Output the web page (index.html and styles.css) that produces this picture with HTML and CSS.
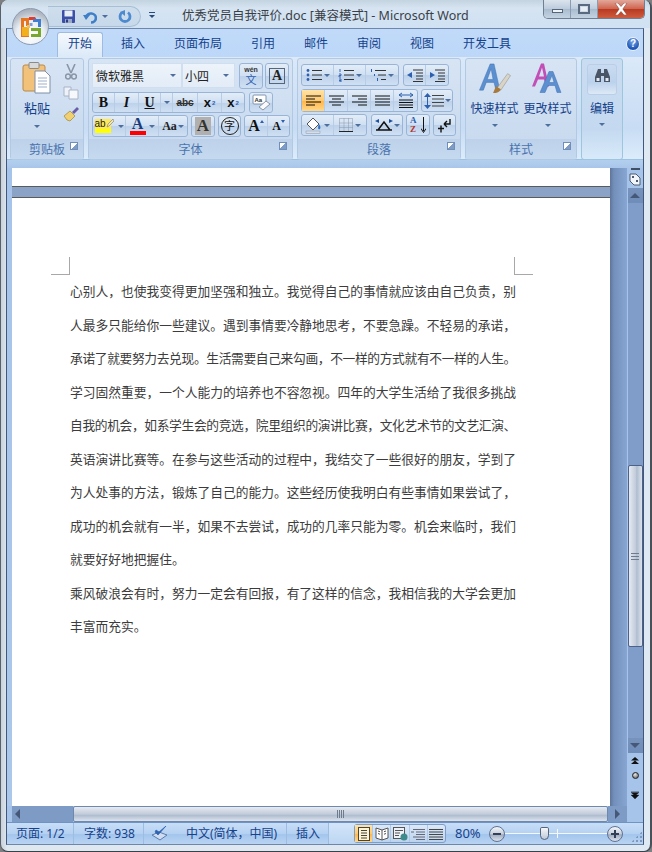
FILE: index.html
```html
<!DOCTYPE html>
<html lang="zh">
<head>
<meta charset="utf-8">
<title>优秀党员自我评价.doc - Microsoft Word</title>
<link rel="stylesheet" href="styles.css">
</head>
<body>
<div class="window">
  <header class="titlebar">
    <div class="office">
      <svg width="26" height="26" viewBox="0 0 26 26"><path d="M3 4h8v8H8V7H6v12h5v4H3z" fill="#e8741c"/><path d="M11 3h6l2 3h-8z" fill="#e33b2e"/><path d="M15 5h8v8h-3V8h-5z" fill="#3f7fd0"/><path d="M13 14h10v9H13v-3h7v-3h-7z" fill="#79a92c"/><path d="M4 13h7v9H4z" fill="#f2b01e"/><rect x="11.500" y="9" width="3" height="3" fill="#79a0d8"/><rect x="9" y="11" width="3" height="3" fill="#f0c060"/></svg>
    </div>
    <div class="qat">
      <svg width="15" height="15" viewBox="0 0 15 15"><rect x="1" y="1" width="13" height="13" rx="1" fill="#3c4fa8"/><rect x="3.500" y="1.500" width="8" height="6" fill="#e8eef8"/><rect x="4" y="10" width="7" height="4" fill="#9aa9c8"/><rect x="5" y="10.500" width="2" height="3" fill="#2c3a80"/></svg>
      <svg class="qi-undo" width="14" height="14" viewBox="0 0 14 14"><path d="M3 7a5 4.500 0 1 1 5 5.500" fill="none" stroke="#3f7fc8" stroke-width="2.600"/><path d="M0 5h7L3 10z" fill="#3f7fc8"/></svg>
      <i class="arrow qi-drop"></i>
      <svg class="qi-redo" width="14" height="14" viewBox="0 0 14 14"><path d="M4 2.500a5 5 0 1 0 6 0" fill="none" stroke="#4d8ad0" stroke-width="2.800"/><path d="M7 0v6L2 2z" fill="#4d8ad0"/></svg>
    </div>
    <div class="customize"><b></b><i class="arrow dark"></i></div>
    <h1 class="doc-title">优秀党员自我评价.doc [兼容模式] - Microsoft Word</h1>
    <div class="winbtns">
      <div class="wb wb-min"><b></b></div>
      <div class="wb wb-max"><b></b></div>
      <div class="wb wb-close">
        <svg width="16" height="12" viewBox="0 0 16 12"><path d="M2 0h3l3 3.500L11 0h3L9.800 6 14 12h-3L8 8.500 5 12H2l4.200-6z" fill="#fff" stroke="#7a3a30" stroke-width=".5"/></svg>
      </div>
    </div>
  </header>

  <div class="client">
    <nav class="tabs">
      <span class="tab active">开始</span>
      <span class="tab t-ins">插入</span>
      <span class="tab t-layout">页面布局</span>
      <span class="tab t-ref">引用</span>
      <span class="tab t-mail">邮件</span>
      <span class="tab t-rev">审阅</span>
      <span class="tab t-view">视图</span>
      <span class="tab t-dev">开发工具</span>
      <span class="help">?</span>
    </nav>

    <section class="ribbon">
      <div class="group g-clip">
        <div class="gbody clip-body">
          <div class="big paste">
            <svg width="30" height="33" viewBox="0 0 30 33"><rect x="1" y="3" width="22" height="26" rx="2" fill="#f2c27a" stroke="#b98a48"/><rect x="7" y="0.500" width="10" height="6" rx="1" fill="#d9d9d9" stroke="#8a8a8a"/><path d="M13 9h10l5 5v17H13z" fill="#fff" stroke="#7f8fa8"/><path d="M16 16h9M16 19h9M16 22h9M16 25h9" stroke="#9db0c8"/></svg>
            <span class="biglabel">粘贴</span>
            <i class="arrow"></i>
          </div>
          <div class="clip-tools">
            <svg width="12" height="16" viewBox="0 0 12 16"><path d="M2 0l4 9M10 0L6 9" stroke="#8a96a8" stroke-width="1.600"/><circle cx="3" cy="12.500" r="2.400" fill="none" stroke="#8a96a8" stroke-width="1.500"/><circle cx="9" cy="12.500" r="2.400" fill="none" stroke="#8a96a8" stroke-width="1.500"/></svg>
            <svg width="16" height="14" viewBox="0 0 16 14"><path d="M1 1h7v9H1z" fill="#eef2f8" stroke="#a8b4c8"/><path d="M6 4h9v9H6z" fill="#f6f8fb" stroke="#a8b4c8"/></svg>
            <svg width="18" height="16" viewBox="0 0 18 16"><path d="M10 6l5-5 2 2-5 5z" fill="#6b5ca8"/><path d="M2 10l6-5 5 5-5 5-3-1z" fill="#f0d070" stroke="#a08430" stroke-width=".7"/></svg>
          </div>
        </div>
        <div class="glabel">剪贴板<u class="launch"></u></div>
      </div>

      <div class="group g-font">
        <div class="gbody font-body">
          <div class="row r1">
            <div class="combo c-name"><span>微软雅黑</span><i class="arrow"></i></div>
            <div class="combo c-size"><span>小四</span><i class="arrow"></i></div>
            <div class="btn w24 wen"><small>wén</small><em>文</em></div>
            <div class="btn w24"><span class="boxa">A</span></div>
          </div>
          <div class="row r2">
            <div class="bgroup">
              <span class="cell w22 serif bold">B</span>
              <span class="cell w24 serif ital">I</span>
              <span class="cell w22 serif under">U</span>
              <span class="cell w12"><i class="arrow"></i></span>
              <span class="cell w25 abc">abc</span>
              <span class="cell w24 sub">x<sub>2</sub></span>
              <span class="cell w22 sub">x<sup>2</sup></span>
            </div>
            <div class="btn w24 mt-eraser">
              <svg width="19" height="18" viewBox="0 0 19 18"><rect x="1" y="1" width="13" height="9" rx="1" fill="#fff" stroke="#7f93b0"/><text x="2.500" y="8" class="mini">Aa</text><path d="M7 13l7-6 4 3-7 6z" fill="#fafafa" stroke="#8a96a8"/></svg>
            </div>
          </div>
          <div class="row r3">
            <div class="bgroup">
              <span class="cell w33 hl"><span class="hl-a"><b>ab</b><svg width="8" height="9" viewBox="0 0 8 9"><path d="M1 8l1-3 5-5 1 2-5 5z" fill="#f4e6a8" stroke="#777" stroke-width=".6"/></svg></span><i class="arrow"></i></span>
              <span class="cell w33 fcolor"><b>A</b><i class="arrow"></i></span>
              <span class="cell aa"><b>Aa</b><i class="arrow"></i></span>
            </div>
            <div class="btn w24 shade"><b>A</b></div>
            <div class="btn w23 circ"><span>字</span></div>
            <div class="bgroup">
              <span class="cell w23 grow"><b>A</b><i class="up"></i></span>
              <span class="cell w21 shrink"><b>A</b><i class="down"></i></span>
            </div>
          </div>
        </div>
        <div class="glabel">字体<u class="launch"></u></div>
      </div>

      <div class="group g-para">
        <div class="gbody para-body">
          <div class="row pr1">
            <div class="bgroup">
              <span class="cell pc32"><svg width="16" height="14" viewBox="0 0 16 14"><path d="M6 2.500h10M6 7h10M6 11.500h10" stroke="#333"/><circle cx="2" cy="2.500" r="1.400" fill="#2d5fb0"/><circle cx="2" cy="7" r="1.400" fill="#2d5fb0"/><circle cx="2" cy="11.500" r="1.400" fill="#2d5fb0"/></svg><i class="arrow"></i></span>
              <span class="cell pc32"><svg width="16" height="14" viewBox="0 0 16 14"><path d="M6 2.500h10M6 7h10M6 11.500h10" stroke="#333"/><path d="M2 1v3M1 6h2v1.500H1V9h2M1 11h2v3H1M1 12.500h2" stroke="#2d5fb0" stroke-width=".9" fill="none"/></svg><i class="arrow"></i></span>
              <span class="cell pc32"><svg width="16" height="14" viewBox="0 0 16 14"><path d="M5 2.500h11M8 7h8M11 11.500h5" stroke="#333"/><path d="M1.500 1v3M4.500 6v2M7.500 10v3" stroke="#2d5fb0"/></svg><i class="arrow"></i></span>
            </div>
            <div class="bgroup">
              <span class="cell pc22"><svg width="16" height="13" viewBox="0 0 16 13"><path d="M6 1h10M9 4h7M9 7h7M9 10h7M6 12.500h10" stroke="#333"/><path d="M0 6l5-3v6z" fill="#2d5fb0"/></svg></span>
              <span class="cell pc22"><svg width="16" height="13" viewBox="0 0 16 13"><path d="M6 1h10M9 4h7M9 7h7M9 10h7M6 12.500h10" stroke="#333"/><path d="M6 6L1 3v6z" fill="#2d5fb0"/></svg></span>
            </div>
          </div>
          <div class="row pr2">
            <div class="bgroup">
              <span class="cell al on"><svg width="15" height="12" viewBox="0 0 15 12"><path d="M0 1h15M0 4h9M0 7h15M0 10h9" stroke="#111"/></svg></span>
              <span class="cell al"><svg width="15" height="12" viewBox="0 0 15 12"><path d="M0 1h15M3 4h9M0 7h15M3 10h9" stroke="#111"/></svg></span>
              <span class="cell al"><svg width="15" height="12" viewBox="0 0 15 12"><path d="M0 1h15M6 4h9M0 7h15M6 10h9" stroke="#111"/></svg></span>
              <span class="cell al"><svg width="15" height="12" viewBox="0 0 15 12"><path d="M0 1h15M0 4h15M0 7h15M0 10h15" stroke="#111"/></svg></span>
              <span class="cell al"><svg width="16" height="17" viewBox="0 0 16 17"><path d="M1 8h14M1 10.500h14M1 13h14M1 15.500h14" stroke="#111"/><path d="M1 3h14M1 3l3-2M1 3l3 2M15 3l-3-2M15 3l-3 2" stroke="#2d5fb0" fill="none"/></svg></span>
            </div>
            <div class="btn lsp"><svg width="20" height="16" viewBox="0 0 20 16"><path d="M8 2.500h12M8 6h12M8 9.500h12M8 13h12" stroke="#444"/><path d="M3.500 0L7 4H0zM3.500 16L7 12H0z" fill="#2d5fb0"/><path d="M3.500 4v8" stroke="#2d5fb0"/></svg><i class="arrow"></i></div>
          </div>
          <div class="row pr3">
            <div class="bgroup borders">
              <span class="cell pc32"><svg width="17" height="17" viewBox="0 0 17 17"><path d="M2 7l6-6 6 6-6 6z" fill="#fff" stroke="#555"/><path d="M14 7c1 2 2 3 1 5-1 1-3 0-1-5z" fill="#2d6fc0"/><rect x="1" y="14" width="14" height="2.500" fill="#d6dde8" stroke="#8a96a8" stroke-width=".5"/></svg><i class="arrow"></i></span>
              <span class="cell pc32"><svg width="14" height="14" viewBox="0 0 14 14"><path d="M.5.500h13v13H.5zM.5 5h13M.5 9.500h13M5 .5v13M9.500.5v13" fill="none" stroke="#8a96a8" stroke-dasharray="1 1"/><path d="M0 13.500h14" stroke="#222"/></svg><i class="arrow"></i></span>
            </div>
            <div class="btn w32"><svg width="18" height="12" viewBox="0 0 18 12"><path d="M3 11L9 3l6 8M1 11h16" fill="none" stroke="#111" stroke-width="1.500"/><path d="M0 2l4-2v4zM18 2l-4-2v4zM6 2h6" fill="#1d4fa0"/></svg><i class="arrow"></i></div>
            <div class="btn w24 sort"><span class="a">A</span><span class="z">Z</span><svg width="5" height="17" viewBox="0 0 5 17"><path d="M2.500 0v14M0 11.500l2.500 4 2.500-4" fill="none" stroke="#111"/></svg></div>
            <div class="btn w23"><svg width="14" height="15" viewBox="0 0 14 15"><path d="M12 1v5H6M6 6l3-3M6 6l3 3" fill="none" stroke="#111" stroke-width="1.400"/><path d="M0 10.500h6M3 7.500v7" stroke="#111" stroke-width="1.400"/></svg></div>
          </div>
        </div>
        <div class="glabel">段落<u class="launch"></u></div>
      </div>

      <div class="group g-style">
        <div class="gbody style-body">
          <div class="big st">
            <svg width="34" height="34" viewBox="0 0 34 34"><path d="M1 29L12 2h4l6 27h-4l-2-8H8l-3 8zM9 18h6l-2-11z" fill="#5b8fd0" stroke="#3e6fb0" stroke-width=".5"/><path d="M19 27l11-15 3 2-10 15z" fill="#d9d4c8" stroke="#8a8678" stroke-width=".5"/><path d="M15 32l3-7 5 3c-1 3-4 4-8 4z" fill="#a87a3c"/></svg>
            <span class="biglabel">快速样式</span>
            <i class="arrow"></i>
          </div>
          <div class="big st">
            <svg width="32" height="30" viewBox="0 0 32 30"><path d="M0 23L9 0h3l5 23h-3l-2-7H6l-3 7zM7 13h5L10 4z" fill="#c24fb6"/><path d="M8 29L17 8h4l8 21h-4l-2-7h-7l-3 7zM17 19h5l-2-7z" fill="#5b8fd0" stroke="#3e6fb0" stroke-width=".5"/></svg>
            <span class="biglabel">更改样式</span>
            <i class="arrow"></i>
          </div>
        </div>
        <div class="glabel">样式<u class="launch"></u></div>
      </div>

      <div class="group g-edit">
        <div class="edit-top">
          <svg width="15" height="14" viewBox="0 0 15 14"><path d="M3 0h3v4h3V0h3l3 8v5H9V7H6v6H0V8z" fill="#4a5566"/><path d="M1.500 9h3v3h-3zM10.500 9h3v3h-3z" fill="#dfe8f3"/></svg>
        </div>
        <span class="biglabel">编辑</span>
        <i class="arrow"></i>
      </div>
    </section>

    <div class="ribbon-gap"></div>

    <div class="workspace">
      <div class="sidebar"></div>
      <div class="doc">
        <div class="pages">
          <div class="page-end"></div>
          <div class="page">
            <div class="crop">
              <span class="mark m-left"></span>
              <span class="mark m-right"></span>
            </div>
            <div class="text">
              <p class="line">心别人，也使我变得更加坚强和独立。我觉得自己的事情就应该由自己负责，别</p>
              <p class="line">人最多只能给你一些建议。遇到事情要冷静地思考，不要急躁。不轻易的承诺，</p>
              <p class="line tight">承诺了就要努力去兑现。生活需要自己来勾画，不一样的方式就有不一样的人生。</p>
              <p class="line">学习固然重要，一个人能力的培养也不容忽视。四年的大学生活给了我很多挑战</p>
              <p class="line tight">自我的机会，如系学生会的竞选，院里组织的演讲比赛，文化艺术节的文艺汇演、</p>
              <p class="line">英语演讲比赛等。在参与这些活动的过程中，我结交了一些很好的朋友，学到了</p>
              <p class="line">为人处事的方法，锻炼了自己的能力。这些经历使我明白有些事情如果尝试了，</p>
              <p class="line">成功的机会就有一半，如果不去尝试，成功的几率只能为零。机会来临时，我们</p>
              <p class="last">就要好好地把握住。</p>
              <p class="line">乘风破浪会有时，努力一定会有回报，有了这样的信念，我相信我的大学会更加</p>
              <p class="last">丰富而充实。</p>
            </div>
          </div>
        </div>
        <div class="doc-shade"></div>
      </div>
      <aside class="vscroll">
        <div class="split"></div>
        <div class="ruler-btn"><svg width="12" height="13" viewBox="0 0 12 13"><path d="M1 1h6l4 4v7H5L1 8z" fill="#f2f5fa" stroke="#4d5a70"/><path d="M3 3h2v2H3zM7 7h2v2H7z" fill="#4d5a70"/></svg></div>
        <div class="track">
          <div class="sb-up"><i></i></div>
          <div class="track-a"></div>
          <div class="thumb"><span></span></div>
          <div class="track-b"></div>
          <div class="sb-down"><i></i></div>
        </div>
        <div class="browse">
          <svg width="8" height="8" viewBox="0 0 8 8"><path d="M4 0L8 3.500H0zM4 3.500L8 7H0z" fill="#111"/></svg>
          <span class="ball"></span>
          <svg width="8" height="8" viewBox="0 0 8 8"><path d="M0 .5h8M0 1.500h8L4 5zM0 4h8L4 8z" fill="#111" stroke="#111" stroke-width=".3"/></svg>
        </div>
      </aside>
    </div>

    <div class="hscroll">
      <div class="hbtn-left"><i></i></div>
      <div class="hthumb"><span></span></div>
      <div class="hbtn-right"><i></i></div>
      <div class="hcorner"></div>
    </div>

    <footer class="status">
      <span class="st-item s-page">页面: 1/2</span>
      <span class="st-item s-count">字数: 938</span>
      <span class="st-item s-proof"><svg width="18" height="15" viewBox="0 0 18 15"><path d="M1 9l7-3 8 3-7 5z" fill="#cfdcf0" stroke="#5d7cab"/><path d="M4 6l3 3 8-9-7 6-3-2z" fill="#2f62b0" stroke="#2f62b0" stroke-width=".7"/></svg></span>
      <span class="st-item s-lang">中文(简体，中国)</span>
      <span class="st-item s-ins">插入</span>
      <span class="st-fill"></span>
      <div class="views">
        <span class="v on"><svg width="12" height="14" viewBox="0 0 12 14"><rect x=".5" y=".5" width="11" height="13" fill="#fff4d0" stroke="#444"/><path d="M3 3.500h6M3 6h6M3 8.500h6M3 11h6" stroke="#444"/></svg></span>
        <span class="v"><svg width="14" height="14" viewBox="0 0 14 14"><path d="M7 3L1 1v10l6 2 6-2V1z" fill="#fff" stroke="#555"/><path d="M7 3v10M3 4l2 .7M3 6.500l2 .7M9 4.700l2-.7M9 7.200l2-.7" stroke="#555"/></svg></span>
        <span class="v"><svg width="15" height="14" viewBox="0 0 15 14"><rect x=".5" y=".5" width="11" height="11" fill="#eef2f8" stroke="#555"/><path d="M2 3.500h8M2 6h5M2 8.500h4" stroke="#555"/><circle cx="11" cy="10" r="3.500" fill="#3f8a8a"/></svg></span>
        <span class="v"><svg width="14" height="12" viewBox="0 0 14 12"><path d="M2 1.500h12M5 4h9M5 6.500h9M2 9h12M5 11.500h9" stroke="#667"/><path d="M0 4h3" stroke="#667"/></svg></span>
        <span class="v"><svg width="14" height="12" viewBox="0 0 14 12"><path d="M0 1.500h14M0 4h14M0 6.500h14M0 9h14M0 11.500h14" stroke="#444"/></svg></span>
      </div>
      <span class="zoom-val">80%</span>
      <span class="zbtn"><b></b></span>
      <div class="slider"><i class="tick"></i><i class="knob"></i></div>
      <span class="zbtn plus"><b></b></span>
      <span class="grip"></span>
    </footer>
  </div>
</div>
</body>
</html>
```
FILE: styles.css
```css
* { box-sizing: border-box; }
html, body { margin: 0; padding: 0; background: #7d7f80; }
body { font-family: "Noto Sans", "Noto Sans CJK SC", sans-serif; }
p, h1 { margin: 0; }
.window {
  width: 652px; height: 852px; overflow: hidden;
  background: linear-gradient(90deg, #c8d2dc 0, #dfe7ef 6px, #dfe9f4 100%);
  border-radius: 8px;
  border-right: 2px solid #4a5058;
  border-bottom: 1px solid #3a4048;
  border-left: 1px solid #5a6068;
  display: flex; flex-direction: column;
}

/* title bar */
.titlebar {
  height: 28px; flex: none; display: flex; position: relative;
  background: linear-gradient(180deg, #c4d3e0 0, #d6e4f2 8px, #cfe1f3 100%);
}
.office {
  position: absolute; left: 11px; top: 8px; width: 37px; height: 37px; border-radius: 50%; z-index: 3;
  background: radial-gradient(circle at 50% 75%, #fff 0, #e8eef4 45%, #b6bdc6 72%, #8e96a2 100%);
  border: 1px solid #8a9ab0; display: flex; align-items: center; justify-content: center;
}
.qat {
  margin: 6px 0 0 47px; width: 93px; height: 21px;
  border: 1px solid #a6bed6; border-left: 0; border-radius: 0 11px 11px 0;
  background: linear-gradient(180deg, #cfdeec, #c6d8ea);
  display: flex; align-items: center; padding-left: 13px;
}
.qi-undo { margin-left: 7px; }
.qi-drop { margin-left: 5px; }
.qi-redo { margin-left: 10px; }
.customize { margin: 12px 0 0 7px; width: 7px; display: flex; flex-direction: column; align-items: center; gap: 2px; }
.customize b { width: 6px; height: 1px; background: #2a4a78; }
.doc-title {
  margin: 7px 0 0 27px; font-size: 12.500px; line-height: 18px; font-weight: 400; color: #3a3f47; white-space: nowrap;
  width: 292px;
}
.winbtns {
  margin-left: auto; margin-right: 5px; height: 19px; width: 102px; display: flex; flex: none;
  border: 1px solid #6e7f92; border-top: 0; border-radius: 0 0 5px 5px; overflow: hidden;
}
.wb { height: 100%; display: flex; align-items: center; justify-content: center; background: linear-gradient(180deg, #dbe4ee, #bccbdb 50%, #a9bccf 52%, #c4d3e3); border-right: 1px solid #8c9cb0; }
.wb-min { width: 28px; }
.wb-min b { width: 11px; height: 4px; margin-top: 4px; background: #eef3f8; border: 1px solid #56657a; }
.wb-max { width: 27px; }
.wb-max b { width: 12px; height: 10px; background: #e8eef5; border: 2px solid #5a6a80; box-shadow: inset 0 0 0 1px #cfd9e5; }
.wb-close { width: 47px; border: 0; background: linear-gradient(180deg, #e2a79a, #cf6650 48%, #b83a22 52%, #cf5c3e); }

/* client */
.client {
  margin-left: 5px; width: 638px; height: 817px; flex: none;
  border-top: 1px solid #6c87a8; border-left: 1px solid #41587a; border-right: 1px solid #41587a;
  border-bottom: 1px solid #6c87a8;
  display: flex; flex-direction: column;
  background: #a9c6ea;
}
.tabs {
  height: 28px; flex: none; position: relative; display: flex;
  background: linear-gradient(180deg, #c1dafa, #bcd7f8);
  color: #15428b; font-size: 12px;
}
.tab { line-height: 17px; margin-top: 2px; padding-top: 4px; white-space: nowrap; }
.tab.active {
  margin: 3px 0 0 50px; width: 46px; height: 25px; text-align: center; padding-top: 2px;
  border: 1px solid #9dbcdf; border-bottom: 0; border-radius: 3px 3px 0 0;
  background: linear-gradient(180deg, #f5f9fd, #dbe9f8);
  position: relative; z-index: 1;
}
.t-ins { margin-left: 18px; }
.t-layout, .t-ref, .t-mail, .t-rev, .t-view, .t-dev { margin-left: 29px; }
.help {
  margin: 8px 3px 0 auto; padding: 0; width: 14px; height: 14px; border-radius: 50%;
  background: radial-gradient(circle at 50% 30%, #7aa8e8, #1d55b5 70%);
  border: 1px solid #e8f0fa; color: #fff; font: 700 10px/12px "Liberation Sans", sans-serif; text-align: center;
}

.ribbon {
  height: 103px; flex: none; padding: 1px 7px 0 3px; display: flex; gap: 4px;
  background: linear-gradient(180deg, #dbe9f8 0, #c8dcf4 70%, #dcecfb 100%);
  border-bottom: 1px solid #9cc2e2;
  color: #15428b;
}
.group {
  height: 102px; flex: none; display: flex; flex-direction: column;
  border: 1px solid #b2c9e3; border-radius: 3px;
  background: linear-gradient(180deg, #d7e4f4, #c6d8ee);
}
.g-clip { width: 74px; }
.g-font { width: 205px; }
.g-para { width: 164px; }
.g-style { width: 112px; }
.g-edit { width: 42px; align-items: center; background: linear-gradient(180deg, #cadcf1, #c4d9f0 70%, #d8eafa); border-color: #9cc6dc; }
.gbody { flex: 1; min-height: 0; }
.glabel {
  height: 20px; flex: none; position: relative; text-align: center;
  font-size: 12px; line-height: 20px; padding-top: 1px; color: #4a73ad;
  background: linear-gradient(180deg, #bdd2ea, #c5d9ef);
}
.launch { position: absolute; right: 5px; top: 3px; width: 8px; height: 8px; border: 1px solid #6f8fb8; background: linear-gradient(135deg, #fff 50%, #7f9cc4 50%); }

.arrow { display: inline-block; width: 0; height: 0; border: 3px solid transparent; border-top: 3px solid #4d6f9e; border-bottom: 0; flex: none; }
.arrow.dark { border-top-color: #2a4a78; }

.big { display: flex; flex-direction: column; align-items: center; }
.biglabel { font-size: 12px; line-height: 16px; color: #15428b; white-space: nowrap; }

.clip-body { display: flex; padding: 3px 0 0 7px; }
.paste { width: 38px; }
.paste .biglabel { margin-top: 5px; font-size: 13px; }
.paste .arrow { margin-top: 9px; }
.clip-tools { margin-left: 5px; width: 20px; padding-top: 2px; display: flex; flex-direction: column; align-items: center; gap: 6px; }

.font-body { padding: 4px 0 0 3px; display: flex; flex-direction: column; gap: 2px; }
.row { display: flex; }
.r1 { gap: 2px; height: 26px; }
.r2 { gap: 4px; height: 21px; margin-top: 1px; }
.r3 { gap: 3px; height: 22px; }
.combo {
  height: 25px; background: linear-gradient(180deg, #edf3fa, #e2ecf7); display: flex; align-items: center; justify-content: space-between;
  padding: 0 5px 0 3px; font-size: 12px; color: #222; border: 1px solid #d0dff0;
}
.c-name { width: 90px; margin-right: -2px; }
.c-size { width: 53px; margin-right: 2px; padding-left: 2px; }
.btn {
  display: flex; align-items: center; justify-content: center; flex: none;
  border: 1px solid #98b5d8; border-radius: 3px;
  background: linear-gradient(180deg, #e3edf8, #cfdff2 50%, #bcd1ea 52%, #d0e0f3);
  color: #222;
}
.bgroup {
  display: flex; flex: none;
  border: 1px solid #98b5d8; border-radius: 3px;
  background: linear-gradient(180deg, #e3edf8, #cfdff2 50%, #bcd1ea 52%, #d0e0f3);
}
.cell {
  display: flex; align-items: center; justify-content: center; gap: 2px; color: #111;
  border-right: 1px solid #b7cde6; height: 100%; flex: none;
}
.cell:last-child { border-right: 0; }
.w12 { width: 12px; }
.w21 { width: 21px; }
.w22 { width: 22px; }
.w23 { width: 23px; }
.w24 { width: 24px; }
.w25 { width: 25px; }
.w32 { width: 32px; }
.w33 { width: 33px; }
.wen { flex-direction: column; }
.wen small { font: 700 7px/7px "Liberation Sans", sans-serif; color: #333; }
.wen em { font-style: normal; font-size: 11px; line-height: 13px; color: #2d5fb0; }
.boxa { font: 700 14px/14px "Liberation Serif", serif; width: 16px; height: 16px; text-align: center; border: 1px solid #56657a; color: #222; }
.serif { font-family: "Liberation Serif", serif; font-size: 14px; }
.bold { font-weight: 700; }
.ital { font-style: italic; font-weight: 700; }
.under { text-decoration: underline; font-weight: 700; }
.abc { font: 700 10px "Liberation Sans", sans-serif; text-decoration: line-through; color: #333; }
.sub { font: 700 13px "Liberation Sans", sans-serif; }
.sub sub, .sub sup { font-size: 6px; color: #2d5fb0; margin-left: -1px; line-height: 0; }
.mini { font: 700 6px "Liberation Sans", sans-serif; fill: #333; }

.hl { gap: 4px; }
.hl-a { display: flex; align-items: flex-start; }
.hl b { font: 400 10px/9px "Liberation Sans", sans-serif; background: linear-gradient(#ffe95a 10px, #ff0 10px); color: #222; height: 14px; width: 16px; display: block; }
.hl svg { margin-left: -5px; }
.fcolor { gap: 3px; }
.fcolor b { font: 700 16px/14px "Liberation Serif", serif; color: #1d3a78; border-bottom: 4px solid #f00; width: 16px; height: 18px; text-align: center; }
.aa { width: 28px; gap: 1px; }
.aa b { font: 700 12px "Liberation Serif", serif; color: #222; }
.shade b { font: 700 17px/18px "Liberation Serif", serif; background: #b0b0b0; color: #333; width: 16px; text-align: center; }
.circ span { width: 18px; height: 18px; border: 1px solid #222; border-radius: 50%; font-size: 11px; line-height: 15px; text-align: center; color: #111; }
.grow { gap: 0; }
.shrink { gap: 0; }
.grow b { font: 700 16px "Liberation Serif", serif; }
.shrink b { font: 700 12px "Liberation Serif", serif; }
.up, .down { width: 0; height: 0; border: 2.500px solid transparent; margin: -9px 0 0 0; }
.up { border-bottom: 3px solid #2d5fb0; border-top: 0; }
.down { border-top: 3px solid #2d5fb0; border-bottom: 0; }

.para-body { padding: 5px 0 0 3px; display: flex; flex-direction: column; }
.pr1 { height: 22px; gap: 4px; }
.pr2 { height: 23px; gap: 3px; margin-top: 3px; }
.pr3 { height: 22px; gap: 3px; margin-top: 2px; }
.borders { margin-right: 1px; }
.pc32 { width: 32px; }
.pc22 { width: 22px; }
.al { width: 23px; }
.al.on { background: linear-gradient(180deg, #ffe3a6, #ffc96e 50%, #ffb54a 52%, #ffd88a); }
.lsp { width: 32px; gap: 1px; }
.btn.w32 { gap: 1px; }
.sort { gap: 1px; position: relative; padding-left: 10px; }
.sort span { position: absolute; left: 3px; font: 700 9px/9px "Liberation Serif", serif; }
.sort .a { top: 1px; color: #2d5fb0; }
.sort .z { top: 10px; color: #b3342c; }

.style-body { display: flex; padding: 3px 0 0 3px; gap: 2px; }
.st { width: 51px; }
.st svg { height: 33px; }
.st .biglabel { margin-top: 6px; }
.st .arrow { margin-top: 7px; }
.edit-top { margin-top: 5px; width: 30px; height: 31px; border-radius: 3px; background: linear-gradient(180deg, #c9dbf0, #bcd2ec 60%, #dde9f6); border: 1px solid #b9cfe8; display: flex; justify-content: center; padding-top: 4px; }
.g-edit .biglabel { margin-top: 6px; }
.g-edit .arrow { margin-top: 6px; }

.ribbon-gap { height: 8px; flex: none; background: linear-gradient(180deg, #b3cfef, #a9c6ea); }

/* workspace */
.workspace { height: 638px; flex: none; display: flex; }
.sidebar { width: 5px; flex: none; background: linear-gradient(180deg, #a6c4e9, #abc7ea); }
.doc { width: 615px; flex: none; display: flex; background: linear-gradient(180deg, #8aa3c6 0, #7f9ac4 100%); overflow: hidden; }
.pages { width: 598px; flex: none; display: flex; flex-direction: column; gap: 10px; }
.page-end { height: 19px; flex: none; background: #fff; border-bottom: 1px solid #5a5a5a; }
.page {
  flex: 1; background: #fff; border-top: 1px solid #5a5a5a;
  padding: 59px 94px 0 58px; color: #3c3c3c;
}
.doc-shade { flex: 1; background: linear-gradient(90deg, #5f7598 0, #7390bc 4px, #88a6d2 100%); }
.crop { display: flex; justify-content: space-between; margin: 0 -17px 0 -19px; height: 18px; }
.mark { width: 19px; height: 18px; border-bottom: 1px solid #a8a8a8; }
.m-left { border-right: 1px solid #a8a8a8; }
.m-right { border-left: 1px solid #a8a8a8; }
.text { margin-top: -1px; font-size: 12.740px; font-family: "Noto Sans CJK SC", sans-serif; }
.line, .last { height: 33.500px; line-height: 33.500px; white-space: nowrap; }
.line { white-space: normal; text-align: justify; text-align-last: justify; overflow: hidden; }
.tight { letter-spacing: -.36px; }

/* vertical scrollbar */
.vscroll { width: 16px; flex: none; display: flex; flex-direction: column; align-items: center; background: #a6c4ea; }
.split { width: 9px; height: 2px; margin-top: 0; background: #3f4f66; flex: none; }
.ruler-btn { margin-top: 1px; height: 17px; display: flex; align-items: center; flex: none; }
.track { width: 15px; flex: 1; display: flex; flex-direction: column; background: #7f9dc8; }
.sb-up, .sb-down { height: 15px; flex: none; display: flex; align-items: center; justify-content: center; background: linear-gradient(180deg, #7793bd, #6f8db9); }
.sb-up i { border: 5px solid transparent; border-bottom: 5px solid #465878; border-top: 0; }
.sb-down i { border: 5px solid transparent; border-top: 5px solid #465878; border-bottom: 0; }
.track-a { height: 262px; flex: none; }
.thumb { height: 182px; flex: none; border: 1px solid #4d6189; border-radius: 2px; background: linear-gradient(90deg, #e6ebf2, #c3ccda 50%, #aebdd0 60%, #dde3ec); display: flex; align-items: center; justify-content: center; }
.thumb span { width: 8px; height: 7px; border-top: 1px solid #6e7b8c; border-bottom: 1px solid #6e7b8c; position: relative; background: linear-gradient(#0000 2px, #6e7b8c 2px, #6e7b8c 3px, #0000 3px); }
.track-b { flex: 1; }
.browse { height: 53px; flex: none; display: flex; flex-direction: column; align-items: center; padding-top: 4px; }
.ball { width: 7px; height: 7px; flex: none; border-radius: 50%; background: radial-gradient(circle at 40% 30%, #e8e8e8, #555); border: 1px solid #222; margin: 7px 0 12px; }

/* horizontal scrollbar */
.hscroll { height: 16px; flex: none; display: flex; background: #a6c4ea; }
.hbtn-left { margin-left: 5px; width: 61px; flex: none; background: #7e9bc6; display: flex; align-items: center; padding-left: 3px; }
.hbtn-left i { border: 5px solid transparent; border-right: 5px solid #465878; border-left: 0; }
.hthumb { width: 535px; flex: none; border: 1px solid #6e88ae; border-radius: 2px; background: linear-gradient(180deg, #e6ebf2, #c3ccda 50%, #aebdd0 60%, #dde3ec); display: flex; justify-content: center; align-items: center; }
.hthumb span { width: 7px; height: 8px; background: repeating-linear-gradient(90deg, #6e7b8c 0 1px, #0000 1px 2px); }
.hbtn-right { width: 19px; flex: none; background: #7e9bc6; display: flex; align-items: center; justify-content: center; }
.hbtn-right i { border: 5px solid transparent; border-left: 5px solid #465878; border-right: 0; }
.hcorner { flex: 1; }

/* status bar */
.status {
  height: 22px; flex: none; display: flex; align-items: center;
  font-size: 12px; color: #15428b;
  background: linear-gradient(180deg, #c8def7, #b5d1f2 50%, #a4c5ec 55%, #b9d4f3);
  border-top: 1px solid #6f93c4;
}
.st-item { height: 100%; display: flex; align-items: center; white-space: nowrap; border-right: 1px solid #9cbce2; flex: none; line-height: 1; }
.s-page { width: 67px; padding-left: 9px; }
.s-count { width: 70px; padding-left: 10px; }
.s-proof { width: 30px; padding-left: 7px; border-right: 0; }
.s-lang { width: 113px; padding-left: 12px; }
.s-ins { width: 42px; padding-left: 9px; }
.st-fill { flex: 0 0 26px; height: 100%; background: linear-gradient(180deg, #d3e5f9, #bdd6f3); }
.views { width: 92px; height: 19px; flex: none; display: flex; margin-left: -1px; border: 1px solid #7d9cc6; border-radius: 3px; background: linear-gradient(180deg, #dbe8f7, #bcd4ef); }
.v { flex: 1; display: flex; align-items: center; justify-content: center; border-right: 1px solid #b0c8e6; }
.v:last-child { border-right: 0; }
.v.on { background: linear-gradient(180deg, #ffe3a6, #ffc96e 50%, #ffb54a 52%, #ffd88a); }
.zoom-val { margin-left: 9px; width: 27px; font: 13px/1 "Noto Sans", sans-serif; color: #15428b; white-space: nowrap; }
.zbtn { margin-left: 7px; width: 16px; height: 16px; flex: none; border-radius: 50%; border: 1px solid #5f7396; background: linear-gradient(180deg, #f3f5f8, #c6cedb 50%, #9eabc0 55%, #dde3ec); display: flex; align-items: center; justify-content: center; position: relative; }
.zbtn b { width: 8px; height: 2px; background: #333f55; }
.zbtn.plus { margin-left: 0; }
.zbtn.plus::after { content: ""; position: absolute; width: 2px; height: 8px; background: #333f55; left: 6px; top: 3px; }
.slider { width: 102px; height: 16px; flex: none; position: relative; background: linear-gradient(#0000 7px, #f4f8fd 7px, #f4f8fd 8px, #0000 8px); }
.tick { position: absolute; left: 52px; top: 3px; width: 1px; height: 9px; background: #f4f8fd; }
.knob { position: absolute; left: 35px; top: 1px; width: 9px; height: 13px; background: linear-gradient(#f5f7fa, #bcc8d8); border: 1px solid #56657a; border-radius: 2px 2px 5px 5px; }
.grip { margin-left: 8px; width: 12px; height: 12px; margin-top: 6px; background: radial-gradient(circle, #7d97bd 1px, #0000 1.200px) 0 0 / 4px 4px; clip-path: polygon(100% 0, 100% 100%, 0 100%); }
```
